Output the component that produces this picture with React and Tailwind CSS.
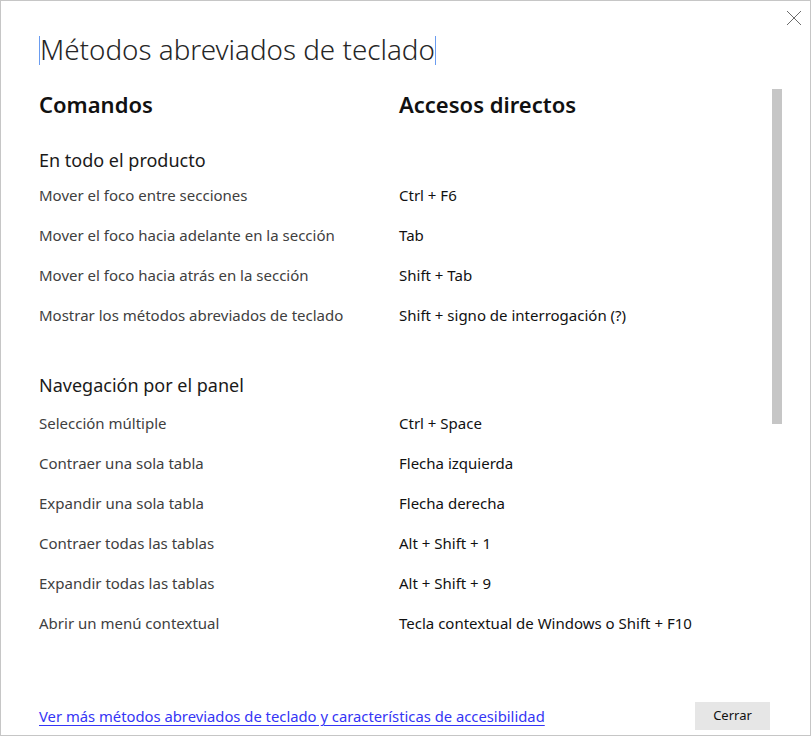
import React from 'react'

const sections = [
  {
    title: 'En todo el producto',
    rows: [
      ['Mover el foco entre secciones', 'Ctrl + F6'],
      ['Mover el foco hacia adelante en la sección', 'Tab'],
      ['Mover el foco hacia atrás en la sección', 'Shift + Tab'],
      ['Mostrar los métodos abreviados de teclado', 'Shift + signo de interrogación (?)'],
    ],
  },
  {
    title: 'Navegación por el panel',
    rows: [
      ['Selección múltiple', 'Ctrl + Space'],
      ['Contraer una sola tabla', 'Flecha izquierda'],
      ['Expandir una sola tabla', 'Flecha derecha'],
      ['Contraer todas las tablas', 'Alt + Shift + 1'],
      ['Expandir todas las tablas', 'Alt + Shift + 9'],
      ['Abrir un menú contextual', 'Tecla contextual de Windows o Shift + F10'],
    ],
  },
]

const Row = ({ command, shortcut }) => (
  <div className="flex h-[40px] items-center text-[15px]">
    <span className="w-[360px] text-[#404040]">{command}</span>
    <span className="text-[#111]">{shortcut}</span>
  </div>
)

const App = () => {
  return (
    <div
      className="relative flex h-[736px] w-[811px] flex-col border border-[#c6c6c6] bg-white text-[#222]"
      style={{ fontFamily: '"Noto Sans", "Open Sans", sans-serif' }}
    >
      <button type="button" className="absolute right-[8px] top-[9px] p-0">
        <svg width="16" height="16" viewBox="0 0 16 16">
          <path d="M1 1 L15 15 M15 1 L1 15" stroke="#6b6b6b" strokeWidth="1" fill="none" />
        </svg>
      </button>

      <div className="mt-[29px] flex h-[40px] items-center pl-[38px]">
        <span className="h-[29px] w-px bg-[#6a9cf0]" />
        <span className="text-[27.8px] font-light leading-none text-[#262626]">Métodos abreviados de teclado</span>
        <span className="h-[29px] w-px bg-[#6a9cf0]" />
      </div>

      <div className="mt-[19px] flex flex-1">
        <div className="flex-1 pl-[38px]">
          <div className="flex h-[30px] items-center text-[22px] font-semibold text-[#111]">
            <span className="w-[360px]">Comandos</span>
            <span>Accesos directos</span>
          </div>

          <div className="mt-[26px] flex h-[30px] items-center text-[18px] text-[#1a1a1a]">{sections[0].title}</div>
          {sections[0].rows.map((r) => (
            <Row key={r[0]} command={r[0]} shortcut={r[1]} />
          ))}

          <div className="mt-[35px] flex h-[30px] items-center text-[18px] text-[#1a1a1a]">{sections[1].title}</div>
          <div className="mt-[3px]">
            {sections[1].rows.map((r) => (
              <Row key={r[0]} command={r[0]} shortcut={r[1]} />
            ))}
          </div>
        </div>
        <div className="mr-[28px] w-[10px]">
          <div className="h-[335px] w-[10px] bg-[#c6c6c6]" />
        </div>
      </div>

      <div className="flex items-center justify-between pb-[5px] pl-[38px] pr-[40px]">
        <a href="#" className="text-[14.8px] text-[#3535f5] underline underline-offset-[3px]">
          Ver más métodos abreviados de teclado y características de accesibilidad
        </a>
        <button type="button" className="h-[28px] w-[75px] bg-[#e6e6e6] text-[13px] text-[#111]">
          Cerrar
        </button>
      </div>
    </div>
  )
}

export default App
